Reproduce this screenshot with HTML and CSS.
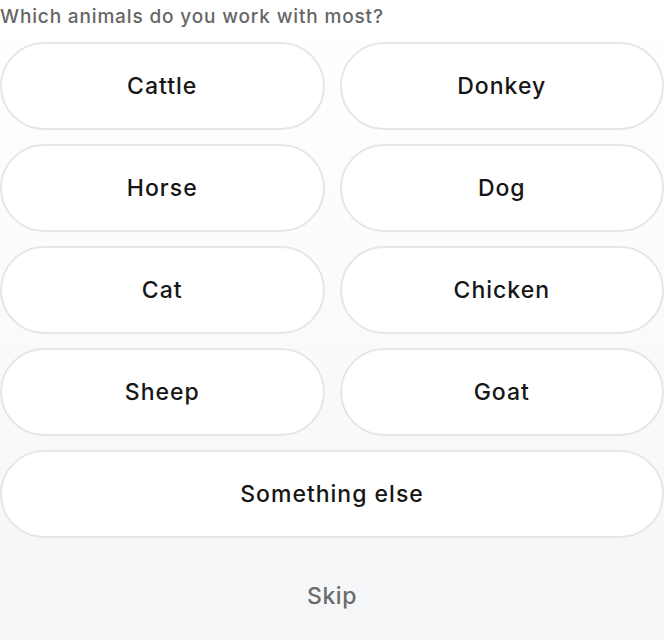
FILE: index.html
```html
<!DOCTYPE html>
<html lang="en">
<head>
<meta charset="utf-8">
<title>Animals</title>
<link rel="stylesheet" href="styles.css">
</head>
<body>
<main class="page">
  <p class="question">Which animals do you work with most?</p>
  <div class="options">
    <button class="option">Cattle</button>
    <button class="option">Donkey</button>
    <button class="option">Horse</button>
    <button class="option">Dog</button>
    <button class="option">Cat</button>
    <button class="option">Chicken</button>
    <button class="option">Sheep</button>
    <button class="option">Goat</button>
    <button class="option option-wide">Something else</button>
  </div>
  <button class="skip">Skip</button>
</main>
</body>
</html>
```

FILE: styles.css
```css
html, body {
  margin: 0;
  padding: 0;
  height: 100%;
}
body {
  background: linear-gradient(180deg, #ffffff 0%, #f5f6f8 100%);
  font-family: Inter, "Noto Sans", "Liberation Sans", sans-serif;
}
.page {
  display: flex;
  flex-direction: column;
  width: 664px;
}
.question {
  margin: 0;
  font-size: 19px;
  line-height: 33px;
  font-weight: 500;
  color: #666666;
  letter-spacing: 0.85px;
}
.options {
  margin-top: 9px;
  display: grid;
  grid-template-columns: 1fr 1fr;
  gap: 14px 15px;
}
.option {
  height: 88px;
  border: 2px solid #e6e6e6;
  border-radius: 44px;
  background: #ffffff;
  font-family: inherit;
  font-size: 23px;
  font-weight: 500;
  letter-spacing: 1px;
  color: #161616;
  padding: 0 0 1px;
  cursor: pointer;
}
.option-wide {
  grid-column: 1 / 3;
}
.skip {
  margin-top: 43px;
  align-self: center;
  background: none;
  border: none;
  padding: 0;
  font-family: inherit;
  font-size: 23px;
  line-height: 30px;
  font-weight: 500;
  letter-spacing: 0.6px;
  color: #6b6b6b;
}
```
